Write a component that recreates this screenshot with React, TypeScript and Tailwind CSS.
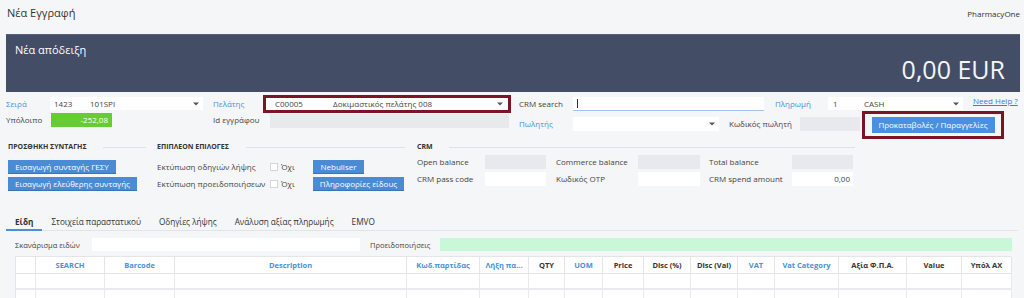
import React from "react";

const Caret = () => (
  <svg width="6" height="4" viewBox="0 0 6 4" className="shrink-0">
    <path d="M0 0.5h6L3 3.5z" fill="#555" />
  </svg>
);

const Btn = ({ children, w }: { children: React.ReactNode; w: string }) => (
  <div
    className={`${w} h-[14px] bg-[#4b8bd4] border-b border-[#3a73b5] text-white flex items-center justify-center whitespace-nowrap`}
  >
    {children}
  </div>
);

const Check = ({ label }: { label: string }) => (
  <>
    <div className="w-[8px] h-[8px] bg-white border border-[#d4d6da]" />
    <span className="ml-[3px] w-[32px]">{label}</span>
  </>
);

const cols = [
  { t: "", c: "" },
  { t: "SEARCH", c: "text-[#4a8fd8]" },
  { t: "Barcode", c: "text-[#4a8fd8]" },
  { t: "Description", c: "text-[#4a8fd8]" },
  { t: "Κωδ.παρτίδας", c: "text-[#4a8fd8]" },
  { t: "Λήξη πα...", c: "text-[#4a8fd8]" },
  { t: "QTY", c: "text-[#333]" },
  { t: "UOM", c: "text-[#4a8fd8]" },
  { t: "Price", c: "text-[#333]" },
  { t: "Disc (%)", c: "text-[#333]" },
  { t: "Disc (Val)", c: "text-[#333]" },
  { t: "VAT", c: "text-[#4a8fd8]" },
  { t: "Vat Category", c: "text-[#4a8fd8]" },
  { t: "Αξία Φ.Π.Α.", c: "text-[#333]" },
  { t: "Value", c: "text-[#333]" },
  { t: "Υπόλ AX", c: "text-[#333]" },
];

const gridCols =
  "grid grid-cols-[20px_69px_70px_232px_73px_49px_36px_38px_41px_47px_47px_37px_64px_68px_55px_50px]";

export default function App() {
  return (
    <div className="w-[1024px] h-[298px] overflow-hidden bg-[#f5f6f8] text-[#444] font-['Open_Sans',sans-serif] text-[8px] leading-[14px]">
      {/* top bar */}
      <div className="flex justify-between items-start h-[34px] pl-[7px] pr-[4px] pt-[6px]">
        <span className="text-[11px] text-[#333]">Νέα Εγγραφή</span>
        <span className="mt-[1px] text-[#333]">PharmacyOne</span>
      </div>

      {/* receipt panel */}
      <div className="ml-[6px] mr-[4px] h-[58px] bg-[#434d66] border-t border-[#56607a] flex flex-col justify-between pl-[9px] pr-[15px] pt-[8px] pb-[14px]">
        <span className="text-[11px] text-white">Νέα απόδειξη</span>
        <div className="self-end text-[25px] leading-[25px] text-[#f4f5f7]">0,00 EUR</div>
      </div>

      {/* row 1 */}
      <div className="flex items-center h-[19px] mt-[2px] pl-[6px]">
        <span className="w-[44px] text-[#4a8fd8]">Σειρά</span>
        <div className="w-[153px] h-[13px] bg-white flex items-center pl-[4px] pr-[4px]">
          <span className="w-[36px]">1423</span>
          <span className="flex-1">101SPI</span>
          <Caret />
        </div>
        <span className="ml-[10px] w-[50px] text-[#4a8fd8]">Πελάτης</span>
        <div className="w-[248px] h-[18px] border-[3px] border-[#7b1526] bg-white flex items-center pl-[9px] pr-[5px]">
          <span className="w-[58px]">C00005</span>
          <span className="flex-1">Δοκιμαστικός πελάτης 008</span>
          <Caret />
        </div>
        <span className="ml-[8px] w-[54px]">CRM search</span>
        <div className="w-[191px] h-[14px] bg-white border-b border-[#a6c3e8] flex items-center pl-[4px]">
          <div className="w-px h-[9px] bg-[#333]" />
        </div>
        <span className="ml-[11px] w-[53px] text-[#4a8fd8]">Πληρωμή</span>
        <div className="w-[135px] h-[13px] bg-white flex items-center pl-[5px] pr-[4px]">
          <span className="w-[31px]">1</span>
          <span className="flex-1">CASH</span>
          <Caret />
        </div>
        <span className="ml-[10px] self-start text-[#3b7fd4] underline">Need Help ?</span>
      </div>

      {/* row 2 */}
      <div className="flex items-start h-[16px] pl-[6px]">
        <span className="w-[45px]">Υπόλοιπο</span>
        <div className="w-[61px] h-[14px] bg-[#66cc33] text-white text-right pr-[4px]">-252,08</div>
        <span className="ml-[101px] w-[57px]">Id εγγράφου</span>
        <div className="w-[239px] h-[14px] mt-[1px] bg-[#e8e9ec]" />
        <span className="ml-[10px] w-[54px] mt-[4px] text-[#4a8fd8]">Πωλητής</span>
        <div className="w-[146px] h-[14px] mt-[4px] bg-white flex items-center justify-end pr-[4px]">
          <Caret />
        </div>
        <span className="ml-[10px] w-[71px] mt-[4px]">Κωδικός πωλητή</span>
        <div className="w-[60px] h-[14px] mt-[4px] bg-[#e8e9ec]" />
        <div className="ml-[2px] mt-[-2px] w-[142px] h-[28px] border-[3px] border-[#7b1526] flex items-center justify-center">
          <div className="w-[123px] h-[16px] bg-[#4a90e2] text-white flex items-center justify-center">
            Προκαταβολές / Παραγγελίες
          </div>
        </div>
      </div>

      {/* sections */}
      <div className="flex items-start mt-[12px] pl-[8px]">
        <div className="w-[138px]">
          <div className="flex items-center h-[12px]">
            <span className="font-bold text-[7px] text-[#333]">ΠΡΟΣΘΗΚΗ ΣΥΝΤΑΓΗΣ</span>
            <div className="flex-1 ml-[16px] h-px bg-[#dfe1e5]" />
          </div>
          <div className="mt-[7px] flex">
            <Btn w="w-[108px]">Εισαγωγή συνταγής ΓΕΣΥ</Btn>
          </div>
          <div className="mt-[3px] flex">
            <Btn w="w-[129px]">Εισαγωγή ελεύθερης συνταγής</Btn>
          </div>
        </div>

        <div className="ml-[11px] w-[248px]">
          <div className="flex items-center h-[12px]">
            <span className="font-bold text-[7px] text-[#333]">ΕΠΙΠΛΕΟΝ ΕΠΙΛΟΓΕΣ</span>
            <div className="flex-1 ml-[17px] h-px bg-[#dfe1e5]" />
          </div>
          <div className="mt-[7px] flex items-center h-[14px]">
            <span className="w-[113px]">Εκτύπωση οδηγιών λήψης</span>
            <Check label="Όχι" />
            <Btn w="w-[51px]">Nebuliser</Btn>
          </div>
          <div className="mt-[3px] flex items-center h-[14px]">
            <span className="w-[113px]">Εκτύπωση προειδοποιήσεων</span>
            <Check label="Όχι" />
            <Btn w="w-[91px]">Πληροφορίες είδους</Btn>
          </div>
        </div>

        <div className="ml-[12px] w-[438px]">
          <div className="flex items-center h-[12px]">
            <span className="font-bold text-[7px] text-[#333]">CRM</span>
            <div className="flex-1 ml-[16px] h-px bg-[#dfe1e5]" />
          </div>
          <div className="mt-[2px] flex items-center h-[14px]">
            <span className="w-[68px]">Open balance</span>
            <div className="w-[61px] h-[14px] bg-[#e8e9ec]" />
            <span className="ml-[10px] w-[82px]">Commerce balance</span>
            <div className="w-[62px] h-[14px] bg-[#e8e9ec]" />
            <span className="ml-[9px] w-[83px]">Total balance</span>
            <div className="w-[61px] h-[14px] bg-[#e8e9ec]" />
          </div>
          <div className="mt-[3px] flex items-center h-[14px]">
            <span className="w-[68px]">CRM pass code</span>
            <div className="w-[61px] h-[14px] bg-white" />
            <span className="ml-[10px] w-[82px]">Κωδικός OTP</span>
            <div className="w-[62px] h-[14px] bg-white" />
            <span className="ml-[9px] w-[83px]">CRM spend amount</span>
            <div className="w-[61px] h-[14px] bg-white text-right pr-[3px]">0,00</div>
          </div>
        </div>
      </div>

      {/* tabs */}
      <div className="mt-[23px] mx-[6px] h-[17px] flex items-stretch border-b border-[#e2e4e8] text-[#333] text-[8.2px]">
        <div className="px-[9px] font-bold border-b-2 border-[#4a8fd8] -mb-px flex items-center">Είδη</div>
        <div className="px-[9px] flex items-center">Στοιχεία παραστατικού</div>
        <div className="px-[9px] flex items-center">Οδηγίες λήψης</div>
        <div className="px-[9px] flex items-center">Ανάλυση αξίας πληρωμής</div>
        <div className="px-[9px] flex items-center">EMVO</div>
      </div>

      {/* scan row */}
      <div className="mt-[7px] pl-[15px] flex items-center h-[13px] text-[7.5px]">
        <span className="w-[77px]">Σκανάρισμα ειδών</span>
        <div className="w-[268px] h-[13px] bg-white" />
        <span className="ml-[10px] w-[70px]">Προειδοποιήσεις</span>
        <div className="w-[572px] h-[13px] bg-[#c8f7da]" />
      </div>

      {/* table */}
      <div className="mt-[5px] ml-[15px] w-[996px] border-l border-t border-[#e3e5e8] bg-white">
        <div className={`${gridCols} h-[17px]`}>
          {cols.map((c, i) => (
            <div
              key={i}
              className={`border-r border-b border-[#e3e5e8] flex items-center justify-center font-bold text-[7.5px] px-[2px] whitespace-nowrap ${c.c}`}
            >
              {c.t}
            </div>
          ))}
        </div>
        <div className={`${gridCols} h-[16px]`}>
          {cols.map((_, i) => (
            <div key={i} className="border-r border-b-2 border-[#e8eaed]" />
          ))}
        </div>
        <div className={`${gridCols} h-[14px]`}>
          {cols.map((_, i) => (
            <div key={i} className="border-r border-b border-[#e8eaed]" />
          ))}
        </div>
      </div>
    </div>
  );
}
